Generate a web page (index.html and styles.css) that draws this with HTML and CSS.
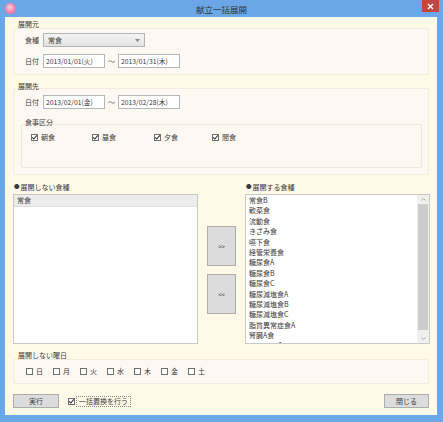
FILE: index.html
```html
<!DOCTYPE html>
<html lang="ja">
<head>
  <meta charset="UTF-8">
  <title>献立一括展開</title>
  <link rel="stylesheet" href="styles.css">
</head>
<body>
  <div class="window">
    <div class="titlebar">
      <span class="app-icon"></span>
      <span class="title">献立一括展開</span>
      <span class="close">
        <svg width="7" height="7" viewBox="0 0 7 7"><path d="M1 1 L6 6 M6 1 L1 6" stroke="#fff" stroke-width="1.4"/></svg>
      </span>
    </div>

    <div class="content">
      <div class="legend legend-source">展開元</div>
      <div class="panel panel-source">
        <div class="row">
          <span class="row-label">食種</span>
          <div class="select">常食
            <svg class="select-arrow" width="5" height="3" viewBox="0 0 5 3"><path d="M0 0 L5 0 L2.5 3 Z" fill="#8a8a8a"/></svg>
          </div>
        </div>
        <div class="row">
          <span class="row-label">日付</span>
          <div class="input">2013/01/01(火)</div>
          <span class="tilde">～</span>
          <div class="input">2013/01/31(木)</div>
        </div>
      </div>

      <div class="legend legend-target">展開先</div>
      <div class="panel panel-target">
        <div class="row">
          <span class="row-label">日付</span>
          <div class="input">2013/02/01(金)</div>
          <span class="tilde">～</span>
          <div class="input">2013/02/28(木)</div>
        </div>
        <div class="legend legend-meal">食事区分</div>
        <div class="inner-box">
          <div class="meal-checks">
            <label class="check"><span class="box checked"><svg width="7" height="7" viewBox="0 0 7 7"><path d="M1.2 3.4 L2.8 5 L5.8 1.4" stroke="#333" stroke-width="1.1" fill="none"/></svg></span>朝食</label>
            <label class="check"><span class="box checked"><svg width="7" height="7" viewBox="0 0 7 7"><path d="M1.2 3.4 L2.8 5 L5.8 1.4" stroke="#333" stroke-width="1.1" fill="none"/></svg></span>昼食</label>
            <label class="check"><span class="box checked"><svg width="7" height="7" viewBox="0 0 7 7"><path d="M1.2 3.4 L2.8 5 L5.8 1.4" stroke="#333" stroke-width="1.1" fill="none"/></svg></span>夕食</label>
            <label class="check"><span class="box checked"><svg width="7" height="7" viewBox="0 0 7 7"><path d="M1.2 3.4 L2.8 5 L5.8 1.4" stroke="#333" stroke-width="1.1" fill="none"/></svg></span>間食</label>
          </div>
        </div>
      </div>

      <div class="lists">
        <div class="list-label"><span class="bullet">●</span>展開しない食種</div>
        <div></div>
        <div class="list-label"><span class="bullet">●</span>展開する食種</div>

        <div class="listbox">
          <div class="items">
            <div class="item selected">常食</div>
          </div>
        </div>
        <div class="move-buttons">
          <button class="btn move">&gt;&gt;</button>
          <button class="btn move">&lt;&lt;</button>
        </div>
        <div class="listbox">
          <div class="items">
            <div class="item">常食B</div>
            <div class="item">軟菜食</div>
            <div class="item">流動食</div>
            <div class="item">きざみ食</div>
            <div class="item">嚥下食</div>
            <div class="item">経管栄養食</div>
            <div class="item">糖尿食A</div>
            <div class="item">糖尿食B</div>
            <div class="item">糖尿食C</div>
            <div class="item">糖尿減塩食A</div>
            <div class="item">糖尿減塩食B</div>
            <div class="item">糖尿減塩食C</div>
            <div class="item">脂質異常症食A</div>
            <div class="item">腎臓A食</div>
            <div class="item">ペースト食</div>
          </div>
          <div class="scrollbar">
            <div class="scroll-arrow"><svg width="5" height="3" viewBox="0 0 5 3"><path d="M0.5 2.5 L2.5 0.5 L4.5 2.5" stroke="#a0a0a0" fill="none"/></svg></div>
            <div class="thumb"></div>
            <div class="scroll-arrow"><svg width="5" height="3" viewBox="0 0 5 3"><path d="M0.5 0.5 L2.5 2.5 L4.5 0.5" stroke="#a0a0a0" fill="none"/></svg></div>
          </div>
        </div>
      </div>

      <div class="legend legend-week">展開しない曜日</div>
      <div class="panel panel-week">
        <div class="week-checks">
          <label class="check"><span class="box"></span>日</label>
          <label class="check"><span class="box"></span>月</label>
          <label class="check"><span class="box"></span>火</label>
          <label class="check"><span class="box"></span>水</label>
          <label class="check"><span class="box"></span>木</label>
          <label class="check"><span class="box"></span>金</label>
          <label class="check"><span class="box"></span>土</label>
        </div>
      </div>

      <div class="footer">
        <button class="btn action">実行</button>
        <label class="check replace"><span class="box checked"><svg width="7" height="7" viewBox="0 0 7 7"><path d="M1.2 3.4 L2.8 5 L5.8 1.4" stroke="#333" stroke-width="1.1" fill="none"/></svg></span><span class="focus">一括置換を行う</span></label>
        <button class="btn action close-btn">閉じる</button>
      </div>
    </div>
  </div>
</body>
</html>
```

FILE: styles.css
```css
body {
  margin: 0;
  font-family: "Noto Sans CJK JP", "Noto Sans", sans-serif;
  font-size: 7px;
  color: #3a3a3a;
}

.window {
  width: 443px;
  height: 422px;
  box-sizing: border-box;
  background: #6ba7e7;
  padding: 0 6px 7px 5px;
  display: flex;
  flex-direction: column;
}

.titlebar {
  height: 17px;
  display: grid;
  grid-template-columns: 1fr auto 1fr;
  align-items: center;
}

.app-icon {
  width: 11px;
  height: 11px;
  border-radius: 50%;
  background: radial-gradient(circle at 45% 40%, #ffd6e6 0, #f58db4 45%, #e0608e 100%);
  margin-top: -1px;
}

.title {
  font-size: 8.5px;
  color: #333;
  padding-left: 1px;
}

.close {
  justify-self: end;
  align-self: start;
  width: 17px;
  height: 12px;
  margin-right: -2px;
  background: #c8453d;
  display: flex;
  align-items: center;
  justify-content: center;
}

.content {
  flex: 1;
  background: #fff9e8;
  padding: 0 7px 0 8px;
  display: flex;
  flex-direction: column;
}

.legend {
  height: 9px;
  line-height: 9px;
  margin-left: 5px;
  position: relative;
}

.legend-source { margin-top: 3px; }
.legend-target { margin-top: 7px; }
.legend-week { margin-top: 7px; }

.panel {
  box-sizing: border-box;
  background: #fdf8f2;
  border: 1px solid #f4ece0;
  border-radius: 2px;
  margin-right: 1px;
}

.panel-source {
  margin-top: -1px;
  height: 47px;
  padding: 4px 0 0 11px;
  display: flex;
  flex-direction: column;
  gap: 7px;
}

.panel-target {
  margin-top: -3px;
  height: 87px;
  padding: 6px 6px 0 7px;
}

.row {
  display: flex;
  align-items: center;
  height: 14px;
}

.row-label {
  width: 18px;
}

.panel-target .row {
  padding-left: 4px;
}

.select {
  box-sizing: border-box;
  width: 102px;
  height: 14px;
  border: 1px solid #b4b4b4;
  background: linear-gradient(#f4f4f4, #e2e2e2);
  padding-left: 4px;
  line-height: 12px;
  display: flex;
  justify-content: space-between;
  align-items: center;
}

.select-arrow {
  margin-right: 4px;
}

.input {
  box-sizing: border-box;
  width: 62px;
  height: 14px;
  border: 1px solid #b2b6bd;
  background: #fff;
  padding-left: 2px;
  line-height: 12px;
  font-size: 6.8px;
  white-space: nowrap;
}

.tilde {
  width: 13px;
  text-align: center;
  color: #555;
}

.legend-meal {
  margin-top: 9px;
  margin-left: 4px;
}

.inner-box {
  box-sizing: border-box;
  height: 44px;
  margin-top: -3px;
  border: 1px solid #efe7dc;
  border-radius: 2px;
  padding: 8px 0 0 9px;
}

.meal-checks {
  display: grid;
  grid-template-columns: 61px 62px 58px auto;
}

.check {
  display: flex;
  align-items: center;
  gap: 3px;
  height: 9px;
  line-height: 9px;
}

.box {
  box-sizing: border-box;
  width: 7px;
  height: 7px;
  border: 1px solid #707070;
  background: #fff;
  display: flex;
  align-items: center;
  justify-content: center;
  flex-shrink: 0;
}

.box svg {
  margin: -1px;
}

.lists {
  margin-top: 7px;
  display: grid;
  grid-template-columns: 185px 29px 185px;
  grid-template-rows: 10px 150px;
  column-gap: 9px;
  row-gap: 2px;
}

.list-label {
  line-height: 10px;
  padding-left: 1px;
}

.bullet {
  font-size: 5.5px;
  vertical-align: 1px;
  margin-right: 1px;
}

.listbox {
  box-sizing: border-box;
  border: 1px solid #c9c9c9;
  background: #fff;
  display: flex;
  overflow: hidden;
}

.items {
  flex: 1;
  overflow: hidden;
}

.item {
  height: 10.4px;
  line-height: 10.4px;
  padding-left: 3px;
  white-space: nowrap;
}

.item.selected {
  height: 11px;
  line-height: 11px;
  background: #ececec;
  border-bottom: 1px solid #e0e0e0;
}

.scrollbar {
  width: 12px;
  background: #f0f0f0;
  display: flex;
  flex-direction: column;
  align-items: center;
}

.scroll-arrow {
  height: 9px;
  display: flex;
  align-items: center;
  justify-content: center;
}

.thumb {
  flex: 1;
  width: 10px;
  background: #cdcdcd;
  margin-bottom: 4px;
}

.move-buttons {
  display: flex;
  flex-direction: column;
  gap: 8px;
  padding-top: 32px;
}

.btn {
  font-family: inherit;
  font-size: 7px;
  color: #3a3a3a;
  background: #dcdcdc;
  border: 1px solid #adadad;
  padding: 0;
  box-sizing: border-box;
}

.btn.move {
  height: 40px;
  font-size: 6px;
}

.panel-week {
  margin-top: -1px;
  height: 25px;
  padding: 7px 0 0 12px;
}

.week-checks {
  display: grid;
  grid-template-columns: repeat(7, 27px);
}

.footer {
  margin-top: 10px;
  display: flex;
  align-items: center;
  height: 14px;
}

.btn.action {
  width: 46px;
  height: 14px;
}

.replace {
  margin-left: 9px;
  gap: 1px;
}

.focus {
  border: 1px dotted #8a8a8a;
  padding: 0 2px;
  line-height: 9px;
}

.close-btn {
  margin-left: auto;
  margin-right: 1px;
  width: 45px !important;
}
```
